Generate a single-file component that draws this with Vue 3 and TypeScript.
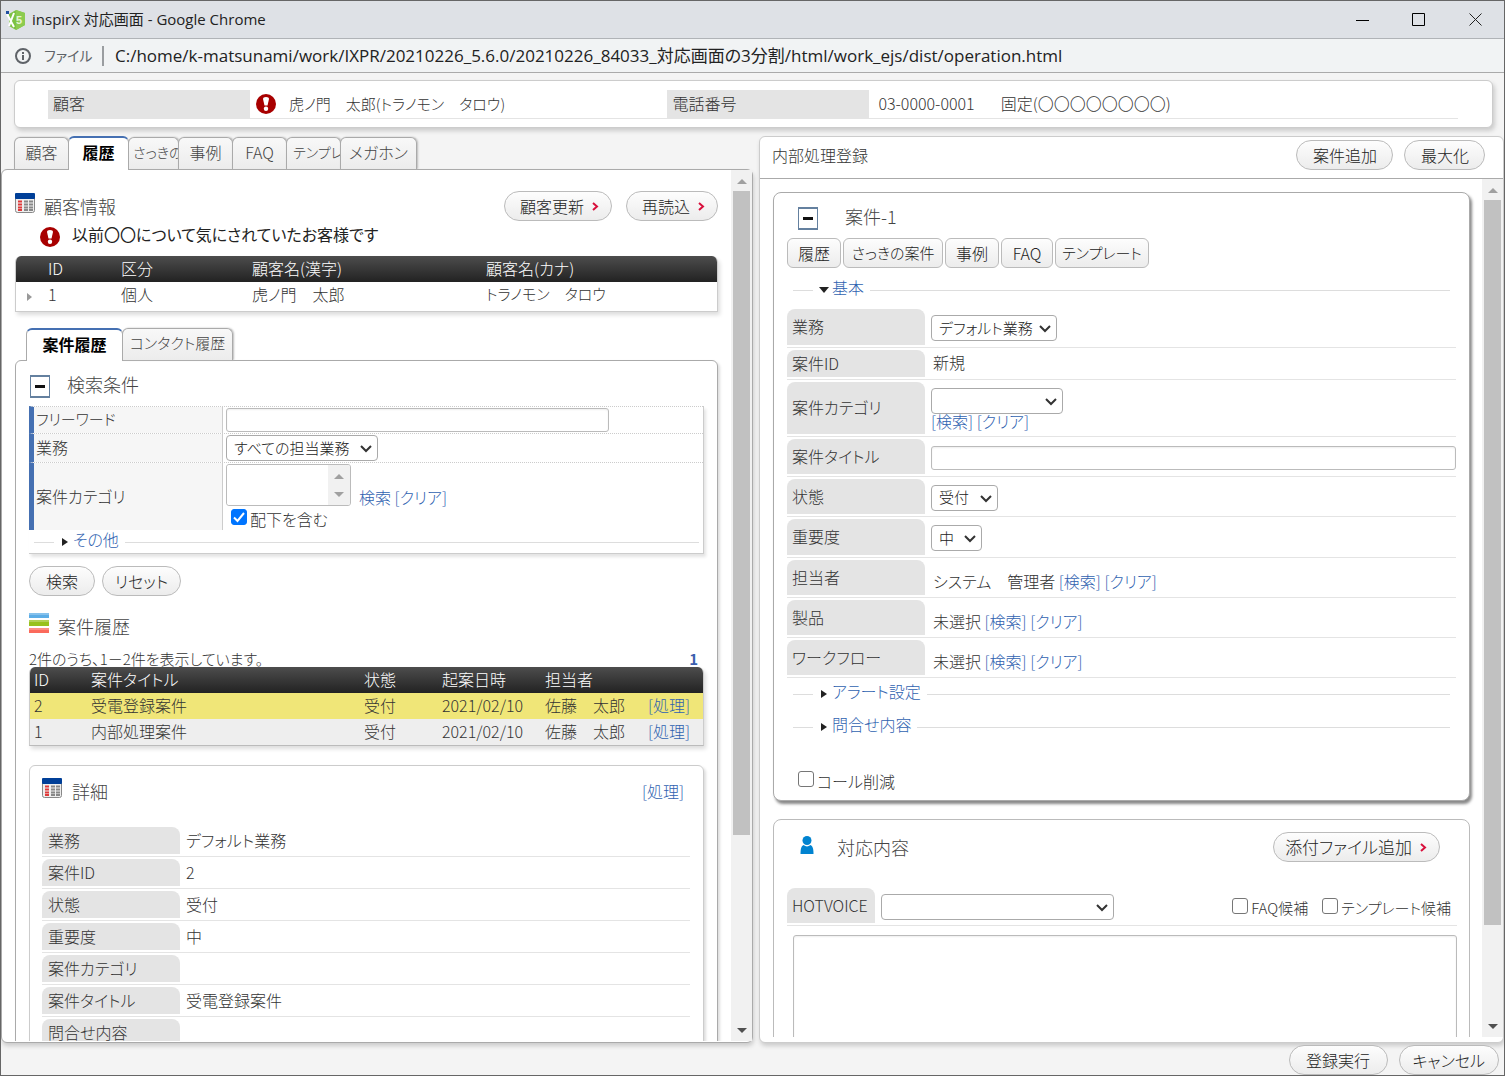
<script setup lang="ts">
import { ref } from 'vue'

interface Field { label: string; value: string }
interface CaseRow { id: string; title: string; status: string; date: string; owner: string }
interface Sized { label: string; size: string }

const mainTabs: Sized[] = [
  { label: '顧客', size: 'w54' },
  { label: '履歴', size: 'active' },
  { label: 'さっきの', size: 'w50' },
  { label: '事例', size: 'w54' },
  { label: 'FAQ', size: 'w54' },
  { label: 'テンプレ', size: 'w54 cut' },
  { label: 'メガホン', size: 'w76' },
]
const cases: CaseRow[] = [
  { id: '2', title: '受電登録案件', status: '受付', date: '2021/02/10', owner: '佐藤　太郎' },
  { id: '1', title: '内部処理案件', status: '受付', date: '2021/02/10', owner: '佐藤　太郎' },
]
const details: Field[] = [
  { label: '業務', value: 'デフォルト業務' },
  { label: '案件ID', value: '2' },
  { label: '状態', value: '受付' },
  { label: '重要度', value: '中' },
  { label: '案件カテゴリ', value: '' },
  { label: '案件タイトル', value: '受電登録案件' },
  { label: '問合せ内容', value: '' },
]
const references: Field[] = [
  { label: '担当者', value: 'システム　管理者' },
  { label: '製品', value: '未選択' },
  { label: 'ワークフロー', value: '未選択' },
]
const caseTools: Sized[] = [
  { label: '履歴', size: 't54' },
  { label: 'さっきの案件', size: 't100 kana' },
  { label: '事例', size: 't54' },
  { label: 'FAQ', size: 't52' },
  { label: 'テンプレート', size: 't94 kana' },
]
const includeChildren = ref(true)
</script>

<template>
  <div class="window">
    <header class="titlebar">
      <svg class="favicon" width="22" height="22" viewBox="0 0 22 22">
        <path d="M11 1l9 3v12l-9 5-7-4V5z" fill="#7cc243" />
        <path d="M11 1l9 3v12l-9 5z" fill="#8ccb4f" />
        <path d="M2 5l7 13M9 4L4 17" stroke="#fff" stroke-width="2" fill="none" />
        <rect x="1" y="2" width="3" height="3" fill="#1f4fa0" />
        <text x="11" y="15" font-size="11" font-weight="700" font-family="Liberation Sans, sans-serif" fill="#e4f5d4">5</text>
      </svg>
      <h1>inspirX 対応画面 - Google Chrome</h1>
      <div class="win-buttons">
        <button type="button" aria-label="最小化"><svg width="14" height="14"><path d="M1 7.500h13" stroke="#000" /></svg></button>
        <button type="button" aria-label="ウィンドウを最大化"><svg width="14" height="14"><path d="M.5.5h12v12H.5z" stroke="#000" fill="none" /></svg></button>
        <button type="button" aria-label="閉じる"><svg width="14" height="14"><path d="M.5.5l12 12M12.500.5l-12 12" stroke="#222" /></svg></button>
      </div>
    </header>
    <div class="urlbar">
      <svg width="18" height="18" viewBox="0 0 18 18"><circle cx="9" cy="9" r="7" fill="none" stroke="#5f6368" stroke-width="2" /><path d="M9 8v5M9 5v2" stroke="#5f6368" stroke-width="2" /></svg>
      <span class="scheme">ファイル</span>
      <span class="sep"></span>
      <span class="path">C:/home/k-matsunami/work/IXPR/20210226_5.6.0/20210226_84033_対応画面の3分割/html/work_ejs/dist/operation.html</span>
    </div>

    <section class="customer-bar">
      <dl>
        <dt>顧客</dt>
        <dd class="name">
          <svg width="20" height="20" viewBox="0 0 20 20"><circle cx="10" cy="10" r="10" fill="#a80000" /><path d="M7 5q0-2 3-2t3 2l-1.500 6.500h-3z" fill="#fff" /><circle cx="10" cy="14.800" r="2.200" fill="#fff" /></svg>
          虎ノ門　太郎(トラノモン　タロウ)
        </dd>
        <dt>電話番号</dt>
        <dd class="phone"><span class="number">03-0000-0001</span><span>固定(〇〇〇〇〇〇〇〇)</span></dd>
      </dl>
    </section>

    <main class="columns">
      <section class="left">
        <nav class="tabs main-tabs">
          <button v-for="t in mainTabs" :key="t.label" type="button" :class="t.size"><span>{{ t.label }}</span></button>
        </nav>
        <div class="panel left-panel">
          <div class="scroll left-scroll">
            <div class="head customer-head">
              <svg class="cal" width="20" height="20" viewBox="0 0 20 20"><rect x=".5" y=".5" width="19" height="19" rx="2" fill="#eee" stroke="#888" /><rect width="20" height="6" rx="1" fill="#003f98" /><path d="M3 8.500h4M3 11.500h4M3 14.500h4M3 17h4" stroke="#e03a3a" stroke-width="2" /><path d="M9 8.500h4M9 11.500h4M9 14.500h4M9 17h4M14 8.500h4M14 11.500h4M14 14.500h4M14 17h4" stroke="#888" stroke-width="2" /></svg>
              <h2>顧客情報</h2>
              <div class="actions">
                <button type="button" class="pill arrow">顧客更新<svg width="7" height="9" viewBox="0 0 7 9"><path d="M1 1l4 3.500L1 8" fill="none" stroke="#d8103c" stroke-width="2" /></svg></button>
                <button type="button" class="pill arrow">再読込<svg width="7" height="9" viewBox="0 0 7 9"><path d="M1 1l4 3.500L1 8" fill="none" stroke="#d8103c" stroke-width="2" /></svg></button>
              </div>
            </div>
            <p class="notice">
              <svg width="20" height="20" viewBox="0 0 20 20"><circle cx="10" cy="10" r="10" fill="#a80000" /><path d="M7 5q0-2 3-2t3 2l-1.500 6.500h-3z" fill="#fff" /><circle cx="10" cy="14.800" r="2.200" fill="#fff" /></svg>
              <span>以前〇〇について気にされていたお客様です</span>
            </p>
            <table class="grid customer-grid">
              <thead><tr><th class="c-mark"></th><th class="c-id">ID</th><th class="c-kind">区分</th><th class="c-name">顧客名(漢字)</th><th>顧客名(カナ)</th></tr></thead>
              <tbody><tr><td class="mark"><svg width="5" height="8"><path d="M0 0l5 4-5 4z" fill="#999" /></svg></td><td>1</td><td>個人</td><td>虎ノ門　太郎</td><td class="kana">トラノモン　タロウ</td></tr></tbody>
            </table>

            <nav class="tabs sub-tabs">
              <button type="button" class="active"><span>案件履歴</span></button>
              <button type="button" class="w110 kana"><span>コンタクト履歴</span></button>
            </nav>
            <div class="sub-panel">
              <div class="head search-head">
                <button type="button" class="toggle" aria-label="検索条件を閉じる"></button>
                <h2>検索条件</h2>
              </div>
              <form class="search" @submit.prevent>
                <div class="srow r1"><label for="freeword" class="kana">フリーワード</label><div><input id="freeword" class="box freeword" type="text" /></div></div>
                <div class="srow r2"><label for="biz">業務</label><div>
                  <span class="select w152"><select id="biz"><option>すべての担当業務</option></select><svg width="12" height="8" viewBox="0 0 12 8"><path d="M1 1l5 5 5-5" fill="none" stroke="#333" stroke-width="2" /></svg></span></div></div>
                <div class="srow r3"><label for="cats">案件カテゴリ</label><div>
                  <div class="cat-line">
                    <span class="multi"><select id="cats" multiple></select><span class="spin"><i class="up"></i><i class="down"></i></span></span>
                    <span><a href="#">検索</a> <a href="#">[クリア]</a></span>
                  </div>
                  <label class="check"><input v-model="includeChildren" type="checkbox" /><svg width="16" height="16" viewBox="0 0 16 16"><path d="M3 8.500l3.500 3.500L13 4" fill="none" stroke="#fff" stroke-width="2" /></svg>配下を含む</label>
                </div></div>
                <div class="fold other"><i class="tri"></i><a href="#">その他</a></div>
              </form>
              <div class="search-buttons">
                <button type="button" class="pill">検索</button>
                <button type="button" class="pill">リセット</button>
              </div>
              <div class="head history-head">
                <svg width="20" height="20"><rect width="20" height="5" fill="#5cade6" /><rect y="7" width="20" height="6" fill="#98c11e" /><rect y="15" width="20" height="5" fill="#fb6a5c" /><path d="M0 1h20M0 8h20M0 16h20" stroke="#fff" stroke-opacity=".25" stroke-width="2" /></svg>
                <h2>案件履歴</h2>
              </div>
              <div class="count"><span>2件のうち、1－2件を表示しています。</span><b>1</b></div>
              <table class="grid case-grid">
                <thead><tr><th class="k-id">ID</th><th class="k-title">案件タイトル</th><th class="k-state">状態</th><th class="k-date">起案日時</th><th class="k-owner">担当者</th><th></th></tr></thead>
                <tbody>
                  <tr v-for="(c, i) in cases" :key="c.id" :class="{ selected: i === 0 }">
                    <td>{{ c.id }}</td><td>{{ c.title }}</td><td>{{ c.status }}</td><td>{{ c.date }}</td><td>{{ c.owner }}</td><td><a href="#">[処理]</a></td>
                  </tr>
                </tbody>
              </table>
              <section class="detail">
                <div class="head detail-head">
                  <svg class="cal" width="20" height="20" viewBox="0 0 20 20"><rect x=".5" y=".5" width="19" height="19" rx="2" fill="#eee" stroke="#888" /><rect width="20" height="6" rx="1" fill="#003f98" /><path d="M3 8.500h4M3 11.500h4M3 14.500h4M3 17h4" stroke="#e03a3a" stroke-width="2" /><path d="M9 8.500h4M9 11.500h4M9 14.500h4M9 17h4M14 8.500h4M14 11.500h4M14 14.500h4M14 17h4" stroke="#888" stroke-width="2" /></svg>
                  <h2>詳細</h2>
                  <a href="#">[処理]</a>
                </div>
                <dl class="fields">
                  <div v-for="d in details" :key="d.label" class="field h32"><dt class="tag">{{ d.label }}</dt><dd>{{ d.value }}</dd></div>
                </dl>
              </section>
            </div>
          </div>
          <div class="bar"><i class="up"></i><div class="track"><div class="thumb thumb-left"></div></div><i class="down dark"></i></div>
        </div>
      </section>

      <section class="panel right">
        <div class="right-head">
          <h3>内部処理登録</h3>
          <div class="actions">
            <button type="button" class="pill">案件追加</button>
            <button type="button" class="pill">最大化</button>
          </div>
        </div>
        <div class="right-body">
          <div class="scroll right-scroll">
            <section class="card case-card">
              <div class="head case-head">
                <button type="button" class="toggle" aria-label="案件-1を閉じる"></button>
                <h2>案件-1</h2>
              </div>
              <div class="tools"><button v-for="t in caseTools" :key="t.label" type="button" :class="t.size">{{ t.label }}</button></div>
              <div class="fold basic"><i class="tri open"></i><a href="#">基本</a></div>
              <div class="fields">
                <div class="field h41"><label class="tag" for="f-biz">業務</label><div class="value">
                  <span class="select w126"><select id="f-biz"><option>デフォルト業務</option></select><svg width="12" height="8" viewBox="0 0 12 8"><path d="M1 1l5 5 5-5" fill="none" stroke="#333" stroke-width="2" /></svg></span></div></div>
                <div class="field h32"><span class="tag">案件ID</span><div class="value text">新規</div></div>
                <div class="field h57"><label class="tag" for="f-cat">案件カテゴリ</label><div class="value stack">
                  <span class="select w132"><select id="f-cat"></select><svg width="12" height="8" viewBox="0 0 12 8"><path d="M1 1l5 5 5-5" fill="none" stroke="#333" stroke-width="2" /></svg></span>
                  <span class="links"><a href="#">[検索]</a> <a href="#">[クリア]</a></span></div></div>
                <div class="field h40"><label class="tag" for="f-title">案件タイトル</label><div class="value"><input id="f-title" class="box wide" type="text" /></div></div>
                <div class="field h40"><label class="tag" for="f-state">状態</label><div class="value">
                  <span class="select w67"><select id="f-state"><option>受付</option></select><svg width="12" height="8" viewBox="0 0 12 8"><path d="M1 1l5 5 5-5" fill="none" stroke="#333" stroke-width="2" /></svg></span></div></div>
                <div class="field h41"><label class="tag" for="f-prio">重要度</label><div class="value">
                  <span class="select w51"><select id="f-prio"><option>中</option></select><svg width="12" height="8" viewBox="0 0 12 8"><path d="M1 1l5 5 5-5" fill="none" stroke="#333" stroke-width="2" /></svg></span></div></div>
                <div v-for="r in references" :key="r.label" class="field h40"><span class="tag">{{ r.label }}</span><div class="value text low"><span>{{ r.value }} <a href="#">[検索]</a> <a href="#">[クリア]</a></span></div></div>
              </div>
              <div class="fold group"><i class="tri"></i><a href="#">アラート設定</a></div>
              <div class="fold group"><i class="tri"></i><a href="#">問合せ内容</a></div>
              <label class="check call"><input type="checkbox" />コール削減</label>
            </section>

            <section class="card reply-card">
              <div class="head reply-head">
                <svg width="14" height="18" viewBox="0 0 14 18"><circle cx="7" cy="4.500" r="4.500" fill="#0083d0" /><path d="M3.500 9a5.500 5.500 0 0 0 7 0c2 1 3 3 3 9H.5c0-6 1-8 3-9z" fill="#0083d0" /></svg>
                <h2>対応内容</h2>
                <button type="button" class="pill arrow attach">添付ファイル追加<svg width="7" height="9" viewBox="0 0 7 9"><path d="M1 1l4 3.500L1 8" fill="none" stroke="#d8103c" stroke-width="2" /></svg></button>
              </div>
              <div class="field h40 hot">
                <label class="tag" for="hotvoice">HOTVOICE</label>
                <div class="value"><span class="select w233"><select id="hotvoice"></select><svg width="12" height="8" viewBox="0 0 12 8"><path d="M1 1l5 5 5-5" fill="none" stroke="#333" stroke-width="2" /></svg></span>
                  <div class="cands">
                    <label class="check"><input type="checkbox" />FAQ候補</label>
                    <label class="check"><input type="checkbox" />テンプレート候補</label>
                  </div>
                </div>
              </div>
              <textarea aria-label="対応内容"></textarea>
            </section>
          </div>
          <div class="bar"><i class="up"></i><div class="track"><div class="thumb thumb-right"></div></div><i class="down dark"></i></div>
        </div>
      </section>
    </main>

    <footer>
      <button type="button" class="pill">登録実行</button>
      <button type="button" class="pill">キャンセル</button>
    </footer>
  </div>
</template>

<style>
html, body { margin: 0; }
</style>

<style scoped>
* { box-sizing: border-box; }
.window {
  height: 100vh; overflow: hidden; display: flex; flex-direction: column;
  border: 1px solid #666; background: #f4f4f4; color: #333;
  font: 300 16px/20px "Noto Sans CJK JP", sans-serif; font-feature-settings: "palt";
}
button, input, select, textarea { font: inherit; font-feature-settings: inherit; color: #222; margin: 0; }
h1, h2, h3, p, dl, dt, dd { margin: 0; font-weight: inherit; }
a { color: #2f62b0; text-decoration: none; }
svg { display: block; flex: none; }
button { white-space: nowrap; }

.titlebar { height: 38px; flex: none; display: flex; align-items: center; padding-left: 4px; background: #dee1e6; border-bottom: 1px solid #b0b3b7; color: #222; }
.titlebar h1 { flex: 1; margin-left: 5px; padding-bottom: 2px; font: 400 15px/20px "Open Sans", "Noto Sans CJK JP", sans-serif; font-feature-settings: "palt"; }
.win-buttons { display: flex; }
.win-buttons button { width: 57px; height: 36px; padding: 0; border: 0; background: none; display: flex; align-items: center; justify-content: center; }
.urlbar { height: 34px; flex: none; display: flex; align-items: center; padding-left: 13px; background: #f1f3f4; border-bottom: 1px solid #aaa; font: 400 17px/22px "Open Sans", "Noto Sans CJK JP", sans-serif; font-feature-settings: "palt"; color: #222; white-space: nowrap; }
.scheme { width: 49px; margin-left: 12px; color: #5f6368; font-size: 14px; }
.sep { width: 2px; height: 20px; margin: 0 11px 0 9px; background: #9a9da0; }

.customer-bar { flex: none; height: 48px; margin: 7px 11px 8px 13px; padding: 9px 34px 0 33px; background: #fff; border: 1px solid #ccc; border-radius: 6px; box-shadow: 2px 3px 4px #ccc; }
.customer-bar dl { display: grid; grid-template-columns: 202px 417fr 202px 588fr; height: 29px; border-bottom: 1px solid #e4e4e4; line-height: 24px; }
.customer-bar dt { padding: 1px 0 3px 5px; background: #e4e4e4; }
.customer-bar dd { display: flex; align-items: center; }
.name { gap: 13px; padding-left: 6px; font-size: 15px; }
.phone { padding: 0 0 2px 9px; gap: 26px; }

.columns { flex: 1; min-height: 0; display: flex; gap: 6px; }
.left { flex: 753 1 0; min-width: 0; display: flex; flex-direction: column; }
.panel { background: #fff; border: 1px solid #ccc; border-radius: 6px; box-shadow: 1px 3px 4px #ccc; }
.left-panel { flex: 1; min-height: 0; display: flex; border-color: #aaa; padding-bottom: 1px; }
.right { flex: 744 1 0; min-width: 0; display: flex; flex-direction: column; padding-bottom: 5px; }
.scroll { flex: 1; min-width: 0; overflow: hidden; }

.tabs { display: flex; align-items: flex-end; }
.tabs button { height: 32px; padding: 0; border: 1px solid #aaa; border-bottom: 0; border-radius: 6px 6px 0 0; background: linear-gradient(#f8f8f8, #ececec); color: #444; overflow: hidden; margin-left: -1px; box-shadow: 1px 0 2px #bbb; }
.tabs span { display: block; line-height: 20px; padding-bottom: 4px; text-align: center; }
.tabs .active { position: relative; height: 34px; border-top: 2px solid #4570b2; background: #fff; color: #000; font-weight: 700; box-shadow: none; margin-bottom: -1px; }
.main-tabs { padding-left: 14px; flex: none; }
.w54 { width: 55px; }
.w50 { width: 51px; }
.tabs .w50, .tabs .cut { font-size: 14px; }
.w50 span { text-align: left; padding-left: 4px; }
.cut span { text-align: left; padding-left: 6px; }
.w76 { width: 77px; }
.main-tabs .active { width: 61px; }

.left-scroll { padding: 21px 13px 0 13px; }
.head { display: flex; }
.head h2 { font-size: 18px; line-height: 22px; color: #444; }
.customer-head h2 { margin-left: 9px; padding-top: 4px; flex: 1; }
.cal { margin-top: 2px; }
.customer-head { height: 33px; }
.actions { display: flex; gap: 14px; }
.pill { height: 30px; padding: 0 15px 0 16px; border: 1px solid #bbb; border-radius: 15px; background: linear-gradient(#fdfdfd, #ececec); display: flex; align-items: center; justify-content: center; line-height: 28px; flex: none; }
.pill.arrow { gap: 8px; padding: 0 12px 0 15px; }
.pill.attach { font-size: 17px; padding: 0 12px 0 11px; }
.notice { display: flex; height: 32px; padding: 3px 0 0 25px; gap: 12px; color: #222; font-weight: 400; }
.notice span { line-height: 14px; }

.grid { width: 100%; border-collapse: separate; border-spacing: 0; table-layout: fixed; border: 1px solid #ccc; border-top: 0; border-radius: 6px 6px 0 0; box-shadow: 2px 3px 4px #ddd; overflow: hidden; }
.grid th { height: 26px; padding: 0 0 2px; text-align: left; font-weight: 300; color: #fff; }
.grid thead tr { background: linear-gradient(#4d4d4d, #222); }
.grid td { padding: 0 0 2px; }
.customer-grid td { height: 29px; padding-bottom: 5px; }
.mark svg { margin: 6px 0 0 11px; }
.c-mark { width: 32px; }
.c-id { width: 73px; }
.c-kind { width: 131px; }
.c-name { width: 234px; }

.sub-tabs { margin: 16px 0 0 12px; }
.sub-tabs .active { width: 97px; height: 33px; }
.w110 { width: 111px; }
.tabs .kana, .tools .kana, .grid .kana, .srow .kana { font-size: 15px; }
.sub-panel { border: 1px solid #aaa; border-radius: 6px; padding: 12px 13px 0; height: 900px; box-shadow: 2px 2px 3px #ddd; }
.search-head { height: 33px; }
.toggle { width: 20px; height: 23px; margin-top: 2px; padding: 0; border: 2px solid #64809f; border-left-width: 1px; border-right-width: 1px; background: linear-gradient(#111, #111) center / 10px 3px no-repeat #fff; }
.search-head h2 { margin-left: 17px; }
.search-head { padding-left: 1px; }

.search { border-right: 1px solid #ccc; border-bottom: 1px solid #ccc; box-shadow: 2px 3px 3px #e4e4e4; height: 148px; }
.srow { display: flex; border-top: 1px dotted #ccc; border-left: 5px solid #4570b2; }
.srow > label { width: 189px; flex: none; padding: 0 0 2px 2px; background: #f6f6f6; border-right: 1px solid #ccc; display: flex; align-items: center; }
.srow > div { flex: 1; padding: 1px 3px; }
.r1 { height: 27px; }
.r2 { height: 29px; }
.r3 { height: 68px; }
.box { display: block; height: 24px; border: 1px solid #bbb; border-radius: 3px; background: #fff; padding: 0 6px; box-shadow: inset 0 1px 2px #eee; }
.freeword { width: 383px; }
.select { position: relative; display: inline-block; height: 26px; vertical-align: top; }
.select select { display: block; appearance: none; width: 100%; height: 26px; padding: 0 0 1px 7px; border: 1px solid #aaa; border-radius: 4px; background: #fff; font-size: 15px; line-height: 22px; }
.select svg { position: absolute; right: 6px; top: 10px; pointer-events: none; }
.w152 { width: 152px; }
.w126 { width: 126px; }
.w132 { width: 132px; }
.w67 { width: 67px; }
.w51 { width: 51px; }
.w233 { width: 233px; }
.cat-line { display: flex; gap: 8px; height: 43px; align-items: flex-end; }
.cat-line > span:last-child { line-height: 20px; }
.multi { display: flex; width: 125px; height: 42px; align-self: flex-start; border: 1px solid #bbb; border-radius: 3px; overflow: hidden; }
.multi select { flex: 1; min-width: 0; height: 40px; border: 0; background: #fff; padding: 0; }
.spin { width: 22px; background: #f1f1f1; display: flex; flex-direction: column; align-items: center; justify-content: space-between; padding: 9px 0 8px; }
.up, .down { width: 0; height: 0; border: 5px solid transparent; border-top: 0; border-bottom-color: #a0a0a0; }
.down { border: 5px solid transparent; border-bottom: 0; border-top-color: #a0a0a0; }
.down.dark { border-top-color: #505050; }
.check { display: flex; align-items: center; gap: 3px; position: relative; white-space: nowrap; }
.check input { appearance: none; width: 16px; height: 16px; flex: none; border: 1px solid #767676; border-radius: 3px; background: #fff; margin-top: -4px; }
.check input:checked { background: #0075ff; border-color: #0075ff; }
.check svg { position: absolute; left: 0; top: 0; }
.srow .check { margin: 2px 0 0 5px; }

.fold { display: flex; align-items: center; height: 20px; }
.fold::before { content: ""; width: 20px; height: 1px; background: #ddd; }
.fold::after { content: ""; flex: 1; height: 1px; background: #ddd; margin-left: 6px; }
.fold a { line-height: 18px; padding-bottom: 6px; margin-left: 5px; }
.tri { border: 4px solid transparent; border-left: 6px solid #222; border-right: 0; margin-left: 8px; }
.tri.open { border: 5px solid transparent; border-top: 6px solid #222; border-bottom: 0; margin-left: 6px; }
.basic a { margin-left: 3px; }
.other { margin: 2px 4px 0 5px; }
.search-buttons { display: flex; gap: 7px; margin-top: 12px; }
.search-buttons .pill { min-width: 66px; padding: 0 12px; }
.history-head { margin-top: 17px; height: 36px; }
.history-head h2 { margin-left: 9px; padding-top: 2px; }
.count { display: flex; justify-content: space-between; height: 18px; line-height: 20px; padding-right: 6px; font-size: 15px; }
.count b { color: #3b5fae; font-weight: 700; }
.case-grid td { height: 26px; background: #eee; }
.case-grid .selected td { background: #f0e678; }
.case-grid { border-bottom-color: #bbb; }
.case-grid th:first-child, .case-grid td:first-child { padding-left: 4px; }
.k-id { width: 61px; }
.k-title { width: 273px; }
.k-state { width: 78px; }
.k-date { width: 103px; }
.k-owner { width: 103px; }

.detail { margin-top: 19px; padding: 10px 13px 0 12px; border: 1px solid #ccc; border-radius: 6px; box-shadow: 2px 2px 3px #ddd; height: 400px; }
.detail-head { height: 51px; }
.detail-head h2 { margin-left: 10px; padding-top: 4px; flex: 1; }
.detail-head a { margin: 5px 6px 0 0; }
.field { display: flex; padding-bottom: 2px; position: relative; }
.field::after { content: ""; position: absolute; left: 0; right: 0; bottom: 2px; height: 1px; background: #e4e4e4; }
.h32 { height: 32px; }
.h40 { height: 40px; }
.h41 { height: 41px; }
.h57 { height: 57px; }
.tag { width: 138px; flex: none; margin-bottom: 3px; padding: 0 0 2px 6px; border-radius: 8px 8px 0 0; background: #e4e4e4; display: flex; align-items: center; line-height: 20px; }
.field dd { padding: 3px 0 0 6px; }

.bar { width: 21px; flex: none; background: #f1f1f1; display: flex; flex-direction: column; align-items: center; padding: 9px 0 8px; }
.track { flex: 1; width: 17px; padding-top: 7px; }
.thumb { background: #c1c1c1; }
.thumb-left { height: 77%; }
.thumb-right { height: 88%; }

.right-head { height: 42px; flex: none; display: flex; justify-content: space-between; align-items: flex-start; padding: 3px 18px 0 12px; border-bottom: 1px solid #aaa; }
.right-head h3 { font-size: 16px; line-height: 30px; }
.right-head .actions, footer { gap: 11px; }
.right-body { flex: 1; min-height: 0; display: flex; }
.right-scroll { padding: 13px 12px 0 13px; }
.card { border: 1px solid #bbb; border-radius: 8px; background: #fff; }
.case-card { height: 609px; padding: 12px 13px 0; border-color: #aaa; box-shadow: 2px 3px 3px #888; }
.case-head { height: 33px; padding-left: 11px; }
.case-head h2 { margin-left: 27px; }
.tools { display: flex; gap: 2px; }
.tools button { height: 30px; padding: 0; border: 1px solid #bbb; border-radius: 6px; background: linear-gradient(#fdfdfd, #ececec); line-height: 28px; }
.t54 { width: 54px; }
.t100 { width: 100px; }
.t52 { width: 52px; }
.t94 { width: 94px; }
.fold.basic { margin: 12px 6px 9px; }
.case-card .tag { padding-left: 5px; }
.value { flex: 1; display: flex; align-items: center; padding: 0 0 1px 6px; }
.value.text { padding-left: 8px; padding-bottom: 6px; }
.value.low { padding-bottom: 4px; align-items: flex-end; }
.value.low span { line-height: 26px; }
.value.stack { flex-direction: column; align-items: flex-start; padding-top: 6px; }
.links { line-height: 14px; }
.box.wide { width: 100%; }
.fold.group { margin: 4px 6px 13px; }
.call { margin: 34px 0 0 11px; }
.reply-card { margin-top: 18px; height: 400px; padding: 12px 12px 0 13px; }
.reply-head { height: 56px; padding: 0 17px 0 13px; }
.reply-head svg { margin-top: 4px; }
.reply-head .pill svg { margin-top: 0; }
.reply-head h2 { margin-left: 23px; padding-top: 4px; flex: 1; }
.hot .tag { width: 88px; padding-left: 5px; }
.cands { margin-left: auto; display: flex; gap: 14px; padding: 2px 6px 0 0; font-size: 15px; }
.reply-card textarea { display: block; width: calc(100% - 6px); height: 200px; margin: 7px 0 0 6px; border: 1px solid #bbb; border-radius: 3px; resize: none; background: #fff; box-shadow: inset 0 1px 2px #eee; }

footer { flex: none; height: 32px; display: flex; justify-content: flex-end; padding: 2px 5px 0 0; }
footer .pill { min-width: 99px; padding: 0 13px; }
</style>
